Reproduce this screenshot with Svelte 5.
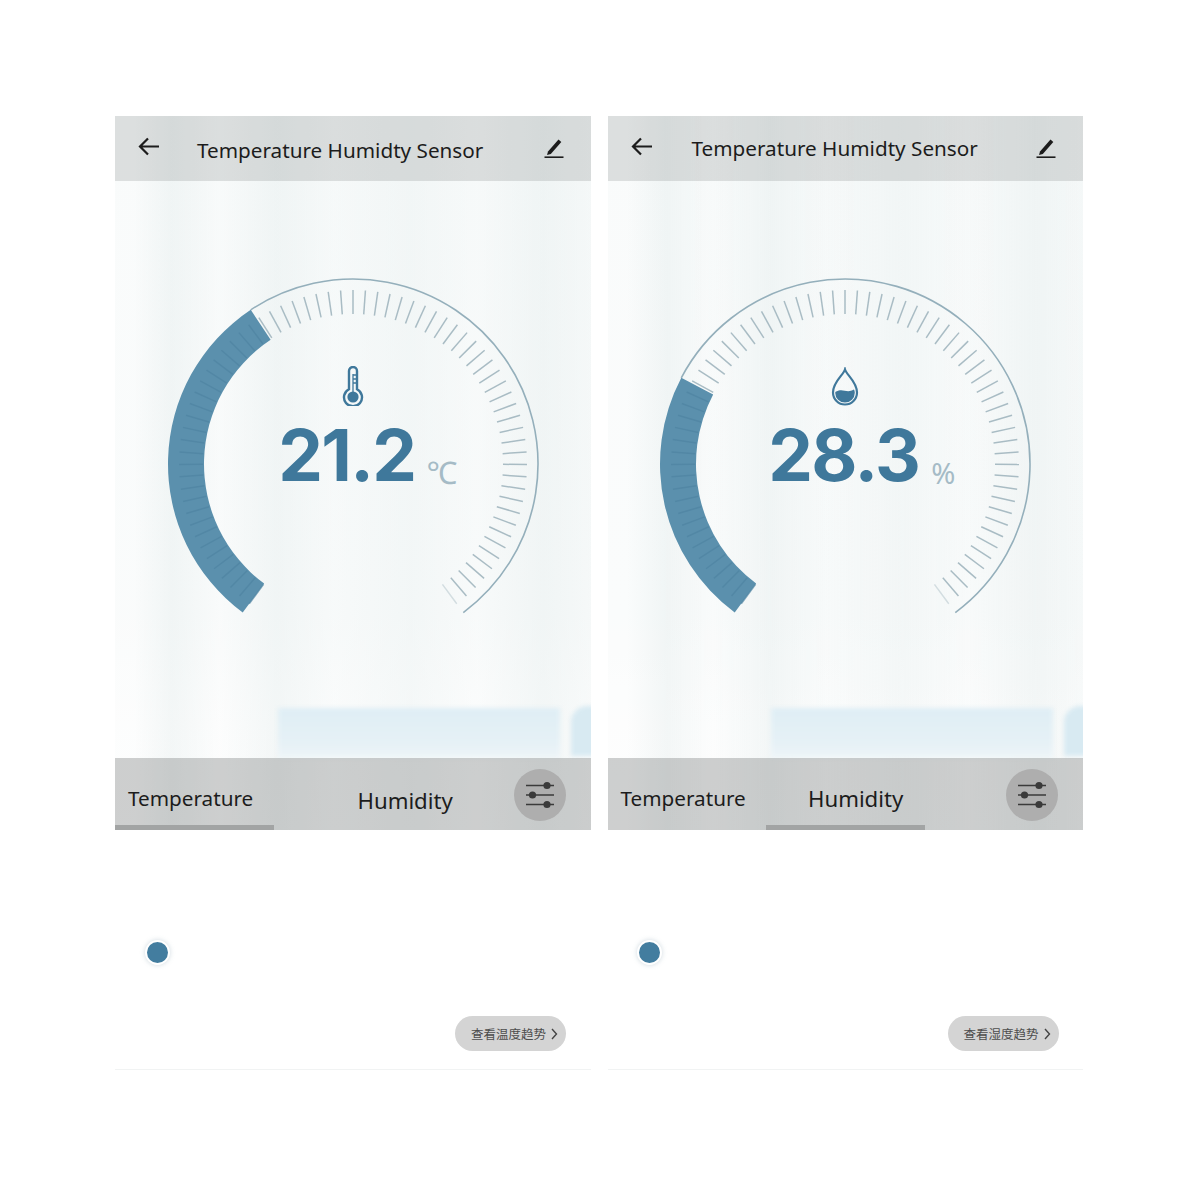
<script>
  const RADIUS = 185;
  const START = -143.4;
  const SWEEP = 286.8;
  const TICKS = 70;

  const screens = [
    {
      id: 'temp',
      value: '21.2',
      unit: '℃',
      fraction: 0.383,
      trend: '查看温度趋势',
      active: 0
    },
    {
      id: 'humidity',
      value: '28.3',
      unit: '%',
      fraction: 0.283,
      trend: '查看湿度趋势',
      active: 1
    }
  ];

  function polar(r, deg) {
    const a = (deg * Math.PI) / 180;
    return [r * Math.sin(a), -r * Math.cos(a)];
  }

  function fmt(p) {
    return p.map((n) => n.toFixed(2)).join(' ');
  }

  function arc(r, from, to) {
    const large = to - from > 180 ? 1 : 0;
    return `M${fmt(polar(r, from))} A${r} ${r} 0 ${large} 1 ${fmt(polar(r, to))}`;
  }

  function band(from, to) {
    const large = to - from > 180 ? 1 : 0;
    return `M${fmt(polar(RADIUS, from))} A${RADIUS} ${RADIUS} 0 ${large} 1 ${fmt(polar(RADIUS, to))} L${fmt(polar(149, to))} A149 149 0 ${large} 0 ${fmt(polar(149, from))} Z`;
  }

  function ticks(fraction) {
    const end = START + SWEEP * fraction;
    const list = [];
    for (let i = 0; i <= TICKS; i++) {
      const deg = START + (SWEEP * i) / TICKS;
      const [x1, y1] = polar(150, deg);
      const [x2, y2] = polar(174, deg);
      list.push({ x1, y1, x2, y2, on: deg < end, fade: i === TICKS });
    }
    return list;
  }
</script>

<div class="page">
  {#each screens as s}
    <section class="phone {s.id}">
      <div class="screen">
        <div class="backdrop"></div>
        <div class="sofa"></div>
        <div class="sofa-end"></div>

        <header class="topbar">
          <svg class="back" viewBox="0 0 24 24" width="24" height="24" fill="none" stroke="#1c1c1c" stroke-width="2.2">
            <path d="M22 11.500H3M11 3.500l-8 8 8 8" />
          </svg>
          <h1>Temperature Humidty Sensor</h1>
          <svg class="edit" viewBox="0 0 22 22" width="22" height="22">
            <path d="M5 14.500 15.500 2.500l2.800 2.400L7.800 17l-3.800 1z" fill="#1c1c1c" />
            <path d="M1.500 20.200h19" stroke="#1c1c1c" stroke-width="1.600" />
          </svg>
        </header>

        <div class="gauge">
          <svg class="dial" viewBox="-187 -187 374 374" width="374" height="374">
            <path d={arc(RADIUS, START + SWEEP * s.fraction, START + SWEEP)} fill="none" stroke="#94afbb" stroke-width="1.600" />
            <path d={band(START, START + SWEEP * s.fraction)} fill="#5b90ad" />
            {#each ticks(s.fraction) as t}
              <line
                x1={t.x1}
                y1={t.y1}
                x2={t.x2}
                y2={t.y2}
                stroke={t.on ? '#4f84a2' : '#a9bcc4'}
                stroke-width="1.500"
                opacity={t.fade ? 0.45 : t.on ? 0.7 : 1}
              />
            {/each}
          </svg>

          <div class="readout">
            {#if s.id === 'temp'}
              <svg class="glyph" viewBox="0 0 22 40" width="22" height="40" fill="none" stroke="#3f789b" stroke-width="2.400">
                <path d="M7 5a4 4 0 0 1 8 0v18.200a9 9 0 1 1-8 0z" />
                <circle cx="11" cy="31" r="5.600" fill="#3f789b" stroke="none" />
                <path d="M11 26V8M11 9h3M11 13h3M11 17h3" stroke-width="1.300" />
              </svg>
            {:else}
              <svg class="glyph" viewBox="0 0 28 40" width="28" height="40" fill="none" stroke="#3f789b" stroke-width="2.200">
                <path d="M14 2.500C12.500 8 2 14.500 2 25.500a12 12 0 0 0 24 0C26 14.500 15.500 8 14 2.500z" />
                <path d="M5.200 24.500c3-1.600 5.500-1.600 8.500-.8 3 .8 6 .8 9.200-1.200.7 1 .9 2.300.9 3.300a9.800 9.800 0 0 1-19.600 0c0-.4 0-.9 1-1.300z" fill="#3f789b" stroke="none" />
              </svg>
            {/if}
            <div class="reading">
              <span class="value">{s.value}</span>
              <span class="unit">{s.unit}</span>
            </div>
          </div>
        </div>

        <nav class="tabs">
          <div class="tab first" class:active={s.active === 0}>Temperature</div>
          <div class="tab second" class:active={s.active === 1}>Humidity</div>
          <button class="filter" aria-label="Adjust">
            <svg viewBox="0 0 30 28" width="30" height="28" fill="#3a3a3a" stroke="#3a3a3a" stroke-width="1.700">
              <path d="M1 4.500h28M1 14h28M1 23.500h28" fill="none" />
              <circle cx="22" cy="4.500" r="3.600" stroke="none" />
              <circle cx="7.500" cy="14" r="3.600" stroke="none" />
              <circle cx="22" cy="23.500" r="3.600" stroke="none" />
            </svg>
          </button>
        </nav>
      </div>

      <div class="below">
        <span class="dot"></span>
        <button class="trend">
          {s.trend}
          <svg viewBox="0 0 7 12" width="7" height="12" fill="none" stroke="#444" stroke-width="1.400">
            <path d="M1 1l4.500 5-4.500 5" />
          </svg>
        </button>
      </div>
    </section>
  {/each}
</div>

<style>
  :global(body) {
    margin: 0;
    background: #fff;
  }

  .page {
    display: flex;
    gap: 17px;
    padding: 116px 0 0 115px;
    height: 1084px;
    box-sizing: border-box;
    font-family: "Noto Sans", "Noto Sans CJK SC", sans-serif;
    color: #1c1c1c;
  }

  .phone {
    width: 475.500px;
  }

  .screen {
    position: relative;
    height: 714px;
    overflow: hidden;
    display: flex;
    flex-direction: column;
  }

  .backdrop {
    position: absolute;
    inset: 0;
    background:
      linear-gradient(90deg,
        rgba(255, 255, 255, 0.5) 0 4%,
        rgba(236, 242, 242, 0.5) 12%,
        rgba(255, 255, 255, 0.4) 22%,
        rgba(236, 242, 242, 0.5) 34%,
        rgba(250, 252, 252, 0.4) 46%,
        rgba(240, 245, 245, 0.5) 62%,
        rgba(252, 253, 253, 0.4) 76%,
        rgba(236, 242, 242, 0.5) 90%,
        rgba(246, 249, 249, 0.4) 100%),
      linear-gradient(180deg, #f3f7f7 0, #f5f8f8 70%, #fafbfb 85%, #fcfdfd 100%);
  }

  .sofa {
    position: absolute;
    left: 163px;
    top: 592px;
    width: 282px;
    height: 50px;
    background: linear-gradient(180deg, #dfeef5, #e6f1f6 70%, #eef5f8);
    filter: blur(2px);
  }

  .sofa-end {
    position: absolute;
    left: 456px;
    top: 590px;
    width: 24px;
    height: 50px;
    border-radius: 16px 0 0 0;
    background: #d8eaf2;
    filter: blur(2px);
  }

  .topbar {
    position: relative;
    flex: none;
    height: 65px;
    display: flex;
    align-items: center;
    padding: 0 26px 0 22px;
    background: rgba(120, 125, 125, 0.22);
  }

  .back {
    margin-top: -3px;
  }

  .edit {
    margin-left: auto;
    margin-top: -1px;
  }

  h1 {
    margin: 4px 0 0 36px;
    font-size: 20.700px;
    font-weight: 400;
    line-height: 1;
    white-space: nowrap;
  }

  .humidity h1 {
    margin: 0 0 0 38px;
  }

  .gauge {
    position: relative;
    flex: 1;
    display: flex;
    justify-content: center;
    align-items: flex-start;
    padding-top: 96px;
  }

  .dial {
    filter: blur(0.3px);
  }

  .readout {
    position: absolute;
    left: 0;
    right: 0;
    top: 185px;
    display: flex;
    flex-direction: column;
    align-items: center;
  }

  .humidity .readout {
    top: 186px;
  }

  .glyph {
    display: block;
  }

  .reading {
    display: flex;
    align-items: baseline;
    margin-top: 17px;
    gap: 11px;
    margin-left: 30px;
    color: #3f789b;
    line-height: 64px;
  }

  .humidity .reading {
    margin-top: 16px;
    gap: 12px;
    margin-left: 33px;
  }

  .value {
    font-family: Inter, sans-serif;
    font-size: 71px;
    font-weight: 700;
    letter-spacing: -1.600px;
  }

  .unit {
    position: relative;
    top: 3px;
    font-size: 31px;
    color: #a5bbc6;
    font-weight: 400;
  }

  .humidity .unit {
    font-size: 29px;
  }

  .tabs {
    position: relative;
    flex: none;
    height: 72px;
    display: flex;
    background: rgba(110, 112, 112, 0.33);
  }

  .tab {
    box-sizing: border-box;
    width: 158.500px;
    font-size: 20.700px;
    line-height: 28px;
    padding-top: 26px;
    white-space: nowrap;
    border-bottom: 5px solid transparent;
  }

  .tab.active {
    border-bottom-color: #a2a4a4;
  }

  .first {
    padding-left: 13px;
  }

  .second {
    font-size: 22.200px;
  }

  .temp .second {
    padding: 29px 0 0 84px;
  }

  .humidity .second {
    padding: 27px 0 0 42px;
  }

  .filter {
    position: absolute;
    right: 25px;
    top: 11px;
    width: 52px;
    height: 52px;
    border: 0;
    border-radius: 50%;
    padding: 0;
    display: flex;
    align-items: center;
    justify-content: center;
    background: #aeaeae;
  }

  .below {
    position: relative;
    height: 240px;
    box-sizing: border-box;
    border-bottom: 1px solid #f1f3f3;
  }

  .dot {
    position: absolute;
    left: 29.500px;
    top: 110px;
    width: 21px;
    height: 21px;
    border-radius: 50%;
    background: #437d9f;
    border: 2px solid #fff;
    box-shadow: 0 0 5px rgba(120, 150, 165, 0.35);
  }

  .trend {
    position: absolute;
    left: 340px;
    top: 186px;
    width: 111px;
    height: 35px;
    border: 0;
    border-radius: 18px;
    padding: 0 8px 0 16px;
    display: flex;
    align-items: center;
    gap: 5px;
    background: #d4d4d4;
    color: #4d4d4d;
    font-family: "Noto Sans CJK SC", sans-serif;
    font-size: 12.500px;
    white-space: nowrap;
  }
</style>
